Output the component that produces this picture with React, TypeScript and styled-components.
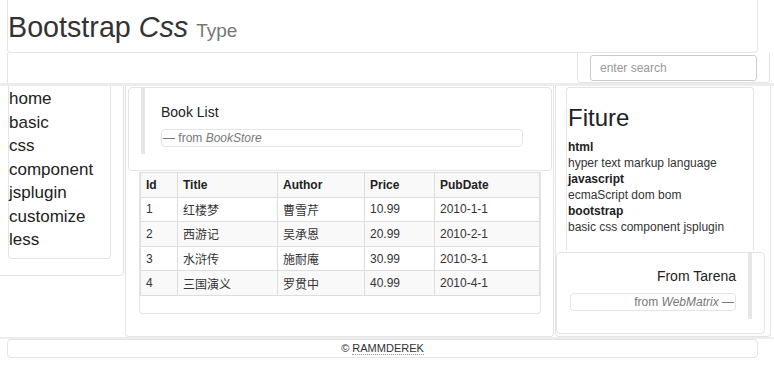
import styled, { createGlobalStyle } from "styled-components";

const GlobalStyle = createGlobalStyle`
  * { box-sizing: border-box; }
  body {
    margin: 0;
    background: #ffffff;
    font-family: "Liberation Sans", Arial, "Noto Sans CJK SC", sans-serif;
    color: #333333;
  }
`;

const line = "#e4e4e4";

const books = [
  { id: 1, title: "红楼梦", author: "曹雪芹", price: "10.99", date: "2010-1-1" },
  { id: 2, title: "西游记", author: "吴承恩", price: "20.99", date: "2010-2-1" },
  { id: 3, title: "水浒传", author: "施耐庵", price: "30.99", date: "2010-3-1" },
  { id: 4, title: "三国演义", author: "罗贯中", price: "40.99", date: "2010-4-1" },
];

const navItems = ["home", "basic", "css", "component", "jsplugin", "customize", "less"];

const App = () => {
  return (
    <>
      <GlobalStyle />
      <Page>
        <Header>
          <h1>
            Bootstrap <em>Css</em> <small>Type</small>
          </h1>
        </Header>
        <NavBar>
          <SearchWrap>
            <SearchInput placeholder="enter search" />
          </SearchWrap>
        </NavBar>
        <Main>
          <LeftCol>
            <SideNav>
              {navItems.map((item) => (
                <li key={item}>{item}</li>
              ))}
            </SideNav>
          </LeftCol>
          <MidCol>
            <Jumbo>
              <Quote>
                <QuoteTitle>Book List</QuoteTitle>
                <QuoteFooter>
                  — from <cite>BookStore</cite>
                </QuoteFooter>
              </Quote>
            </Jumbo>
            <TablePanel>
              <Table>
                <thead>
                  <tr>
                    <th style={{ width: 37 }}>Id</th>
                    <th style={{ width: 100 }}>Title</th>
                    <th style={{ width: 87 }}>Author</th>
                    <th style={{ width: 70 }}>Price</th>
                    <th>PubDate</th>
                  </tr>
                </thead>
                <tbody>
                  {books.map((b) => (
                    <tr key={b.id}>
                      <td>{b.id}</td>
                      <td>{b.title}</td>
                      <td>{b.author}</td>
                      <td>{b.price}</td>
                      <td>{b.date}</td>
                    </tr>
                  ))}
                </tbody>
              </Table>
            </TablePanel>
          </MidCol>
          <RightCol>
            <FeatureBox>
              <FeatureTitle>Fiture</FeatureTitle>
              <dl>
                <dt>html</dt>
                <dd>hyper text markup language</dd>
                <dt>javascript</dt>
                <dd>ecmaScript dom bom</dd>
                <dt>bootstrap</dt>
                <dd>basic css component jsplugin</dd>
              </dl>
            </FeatureBox>
            <TarenaBox>
              <Quote $reverse>
                <QuoteTitle>From Tarena</QuoteTitle>
                <QuoteFooter>
                  from <cite>WebMatrix</cite> —
                </QuoteFooter>
              </Quote>
            </TarenaBox>
          </RightCol>
        </Main>
        <Footer>
          © <abbr>RAMMDEREK</abbr>
        </Footer>
      </Page>
    </>
  );
};
export default App;

const Page = styled.div`
  width: 774px;
  height: 371px;
  overflow: hidden;
`;

const Header = styled.header`
  margin: 0 16px 0 7px;
  height: 53px;
  border: 1px solid ${line};
  border-top: none;
  border-radius: 0 0 4px 4px;
  h1 {
    margin: 0;
    padding: 10px 0 0 0;
    font-size: 28.7px;
    font-weight: 400;
    line-height: 34px;
    color: #333333;
  }
  em {
    font-style: italic;
  }
  small {
    font-size: 19px;
    color: #777777;
  }
`;

const NavBar = styled.nav`
  margin: 0 4px 0 7px;
  height: 30px;
  border-left: 1px solid ${line};
  display: flex;
  justify-content: flex-end;
`;

const SearchWrap = styled.div`
  width: 193px;
  height: 30px;
  border: 1px solid ${line};
  border-top: none;
  border-radius: 0 0 4px 4px;
  padding: 2px 12px 0 12px;
`;

const SearchInput = styled.input`
  width: 167px;
  height: 26px;
  border: 1px solid #cccccc;
  border-radius: 3px;
  padding: 0 9px;
  font-family: "Liberation Sans", Arial, sans-serif;
  font-size: 12px;
  color: #555555;
  outline: none;
  &::placeholder {
    color: #999999;
  }
`;

const Main = styled.main`
  display: grid;
  grid-template-columns: 124px 429px 216px;
  column-gap: 1px;
  height: 256px;
  border-top: 3px solid #ececec;
  border-bottom: 2px solid #ececec;
`;

const LeftCol = styled.aside`
  height: 190px;
  border: 1px solid ${line};
  border-top: none;
  border-left: none;
  border-radius: 0 0 4px 0;
  padding: 0 12px 0 8px;
`;

const SideNav = styled.ul`
  list-style: none;
  margin: 0;
  padding: 1px 0 0 0;
  height: 173px;
  border: 1px solid ${line};
  border-top: none;
  border-radius: 0 0 4px 4px;
  li {
    font-size: 17px;
    line-height: 23.5px;
    color: #222222;
  }
`;

const MidCol = styled.section`
  border: 1px solid ${line};
  border-top: none;
  border-radius: 0 0 4px 4px;
  padding: 1px 1px 0 2px;
`;

const Jumbo = styled.div`
  height: 84px;
  border: 1px solid ${line};
  border-radius: 4px;
  padding: 0 28px 0 12px;
`;

const Quote = styled.blockquote<{ $reverse?: boolean }>`
  margin: 0;
  height: 66px;
  padding: ${(p) => (p.$reverse ? "13px 12px 0 0" : "14px 0 0 16px")};
  border-left: ${(p) => (p.$reverse ? "none" : "4px solid #e6e6e6")};
  border-right: ${(p) => (p.$reverse ? "4px solid #e6e6e6" : "none")};
  text-align: ${(p) => (p.$reverse ? "right" : "left")};
`;

const QuoteTitle = styled.p`
  margin: 0 0 7px 0;
  font-size: 14px;
  line-height: 20px;
  color: #222222;
`;

const QuoteFooter = styled.footer`
  height: 18px;
  border: 1px solid ${line};
  border-radius: 4px;
  font-size: 12px;
  line-height: 16px;
  color: #777777;
  padding: 0 1px;
  cite {
    font-style: italic;
  }
`;

const TablePanel = styled.div`
  margin: 1px 11px 0 11px;
  height: 142px;
  border: 1px solid ${line};
  border-top: none;
  border-radius: 0 0 4px 4px;
`;

const Table = styled.table`
  width: 100%;
  border-collapse: collapse;
  font-size: 12px;
  th,
  td {
    height: 24.6px;
    padding: 0 5px;
    text-align: left;
    border: 1px solid #dddddd;
    color: #333333;
  }
  th {
    font-weight: 700;
    color: #222222;
    background: #f9f9f9;
  }
  tbody tr:nth-child(even) td {
    background: #f9f9f9;
  }
`;

const RightCol = styled.aside`
  border: 1px solid ${line};
  border-top: none;
  border-radius: 0 0 4px 4px;
  padding: 1px 0 0 0;
  display: flex;
  flex-direction: column;
  gap: 2px;
`;

const FeatureBox = styled.div`
  margin: 0 16px 0 10px;
  height: 163px;
  border: 1px solid ${line};
  border-radius: 4px 4px 0 0;
  border-bottom: none;
  padding: 16px 0 0 1px;
  dl {
    margin: 7px 0 0 0;
    font-size: 12px;
    line-height: 16px;
  }
  dt {
    font-weight: 700;
    color: #222222;
  }
  dd {
    margin: 0;
    color: #333333;
  }
`;

const FeatureTitle = styled.h2`
  margin: 0;
  font-size: 24px;
  font-weight: 400;
  line-height: 28px;
  color: #222222;
`;

const TarenaBox = styled.div`
  margin: 0 5px 0 0;
  height: 82px;
  border: 1px solid ${line};
  border-radius: 4px;
  padding: 0 12px 0 13px;
`;

const Footer = styled.footer`
  margin: 0 16px 0 7px;
  height: 19px;
  border: 1px solid ${line};
  border-radius: 4px;
  text-align: center;
  font-size: 11px;
  line-height: 17px;
  color: #333333;
  abbr {
    text-decoration: none;
    border-bottom: 1px dotted #999999;
  }
`;
